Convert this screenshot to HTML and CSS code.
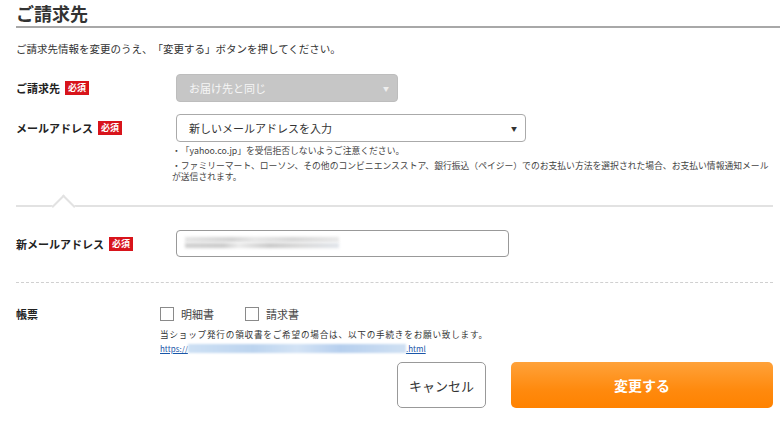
FILE: index.html
```html
<!DOCTYPE html>
<html lang="ja">
<head>
<meta charset="utf-8">
<title>ご請求先</title>
<link rel="stylesheet" href="styles.css">
</head>
<body>
<div class="page">
  <h1 class="title">ご請求先</h1>
  <p class="intro">ご請求先情報を変更のうえ、「変更する」ボタンを押してください。</p>

  <div class="row row-billing">
    <div class="label">ご請求先<span class="req">必須</span></div>
    <div class="field">
      <div class="select select-disabled">
        <span>お届け先と同じ</span><span class="arrow">▼</span>
      </div>
    </div>
  </div>

  <div class="row row-mail">
    <div class="label">メールアドレス<span class="req">必須</span></div>
    <div class="field">
      <div class="select select-mail">
        <span>新しいメールアドレスを入力</span><span class="arrow">▼</span>
      </div>
    </div>
  </div>
  <div class="notes">
    <p>・「yahoo.co.jp」を受信拒否しないようご注意ください。</p>
    <p>・ファミリーマート、ローソン、その他のコンビニエンスストア、銀行振込（ペイジー）でのお支払い方法を選択された場合、お支払い情報通知メールが送信されます。</p>
  </div>

  <div class="separator"><span class="notch"></span></div>

  <div class="row row-new">
    <div class="label">新メールアドレス<span class="req">必須</span></div>
    <div class="field">
      <div class="input">
        <span class="blur blur-a"></span>
        <span class="blur blur-b"></span>
      </div>
    </div>
  </div>

  <div class="dashed"></div>

  <div class="row row-docs">
    <div class="label label-plain">帳票</div>
    <div class="docs">
      <div class="checks">
        <label class="check"><span class="box"></span>明細書</label>
        <label class="check"><span class="box"></span>請求書</label>
      </div>
      <p class="docs-note">当ショップ発行の領収書をご希望の場合は、以下の手続きをお願い致します。</p>
      <a class="docs-link" href="#">https://<span class="link-blur"></span>.html</a>
    </div>
  </div>

  <div class="actions">
    <button class="btn btn-cancel" type="button">キャンセル</button>
    <button class="btn btn-submit" type="button">変更する</button>
  </div>
</div>
</body>
</html>
```

FILE: styles.css
```css
html, body {
  margin: 0;
  padding: 0;
  background: #fff;
}
body {
  font-family: "Noto Sans CJK JP", "Noto Sans", sans-serif;
  color: #333;
  text-spacing-trim: space-all;
}
.page {
  padding: 0 7px 0 16px;
}
.title {
  margin: 0;
  font-size: 18px;
  line-height: 26px;
  font-weight: bold;
  color: #333;
  border-bottom: 2px solid #a8a8a8;
  margin-right: -7px;
}
.intro {
  margin: 13px 0 0;
  font-size: 10.5px;
  line-height: 16px;
  color: #333;
}
.row {
  display: flex;
  align-items: center;
}
.label {
  width: 160px;
  flex: none;
  font-size: 11px;
  font-weight: bold;
  color: #222;
  display: flex;
  align-items: center;
}
.req {
  display: inline-block;
  margin-left: 5px;
  background: #d8141b;
  color: #fff;
  font-size: 9px;
  line-height: 14px;
  padding: 0 3px;
  font-weight: bold;
}
.field {
  flex: 1;
}
.row-billing {
  margin-top: 17px;
}
.row-mail {
  margin-top: 12px;
}
.select {
  height: 28px;
  box-sizing: border-box;
  border-radius: 4px;
  display: flex;
  align-items: center;
  justify-content: space-between;
  padding: 0 8px 0 12px;
  font-size: 11px;
}
.select-disabled {
  width: 222px;
  background: #c6c6c6;
  border: 1px solid #bdbdbd;
  color: #f6f6f6;
}
.select-mail {
  width: 350px;
  background: #fff;
  border: 1px solid #aaa;
  color: #333;
}
.arrow {
  font-size: 6px;
}
.select-disabled .arrow {
  color: #eee;
}
.notes {
  margin: 3px 0 0 156px;
  width: 604px;
  font-size: 8.8px;
  line-height: 11px;
  color: #444;
}
.notes p {
  margin: 0 0 4px;
}
.separator {
  position: relative;
  margin-top: 23px;
  height: 0;
  border-top: 2px solid #e2e2e2;
}
.notch {
  position: absolute;
  left: 39px;
  top: -9px;
  width: 15px;
  height: 15px;
  background: #fff;
  border-top: 2px solid #e2e2e2;
  border-left: 2px solid #e2e2e2;
  transform: rotate(45deg);
}
.row-new {
  margin-top: 23px;
}
.input {
  width: 333px;
  height: 27px;
  box-sizing: border-box;
  border: 1px solid #999;
  border-radius: 4px;
  position: relative;
  background: #fff;
}
.blur {
  position: absolute;
  left: 8px;
  height: 5px;
  width: 154px;
  filter: blur(1.5px);
}
.blur-a {
  top: 6px;
  background: linear-gradient(90deg, #e4e4e4 0%, #d2d2d2 30%, #e6e6e6 45%, #d6d6d6 70%, #e8e8e8 100%);
}
.blur-b {
  top: 12px;
  background: linear-gradient(90deg, #d0d0d0 0%, #cacaca 25%, #eaeaea 35%, #c8c8c8 55%, #d8d8d8 75%, #e0e4ea 100%);
}
.dashed {
  margin-top: 25px;
  border-top: 1px dashed #d0d0d0;
}
.row-docs {
  margin-top: 24px;
  align-items: flex-start;
}
.label-plain {
  width: 144px;
  margin-top: -1px;
  line-height: 16px;
}
.docs {
  flex: 1;
}
.checks {
  display: flex;
  gap: 31px;
}
.check {
  display: flex;
  align-items: center;
  font-size: 11px;
  line-height: 14px;
  color: #444;
}
.box {
  width: 12px;
  height: 12px;
  border: 1px solid #8a8a8a;
  margin-right: 7px;
  background: #fff;
}
.docs-note {
  margin: 7px 0 0;
  font-size: 8.6px;
  line-height: 13px;
  letter-spacing: 0.8px;
  color: #333;
}
.docs-link {
  display: flex;
  width: fit-content;
  align-items: center;
  font-size: 8px;
  line-height: 13px;
  color: #1a56a8;
  text-decoration: underline;
  margin-top: 1px;
}
.link-blur {
  display: inline-block;
  width: 218px;
  height: 9px;
  background: linear-gradient(90deg, #cde0f4 0%, #bcd4ef 30%, #d3e3f5 50%, #b6cfee 70%, #cfe0f3 100%);
  filter: blur(0.8px);
}
.actions {
  display: flex;
  justify-content: flex-end;
  gap: 25px;
  margin-top: 7px;
}
.btn {
  font-family: "Noto Sans CJK JP", "Noto Sans", sans-serif;
  height: 46px;
  border-radius: 5px;
  cursor: pointer;
}
.btn-cancel {
  width: 89px;
  background: #fff;
  border: 1px solid #999;
  color: #333;
  font-size: 13px;
}
.btn-submit {
  width: 262px;
  border: none;
  background: linear-gradient(180deg, #ffa23a 0%, #ff8a0e 60%, #ff8200 100%);
  color: #fff;
  font-size: 14px;
  font-weight: bold;
}
```
